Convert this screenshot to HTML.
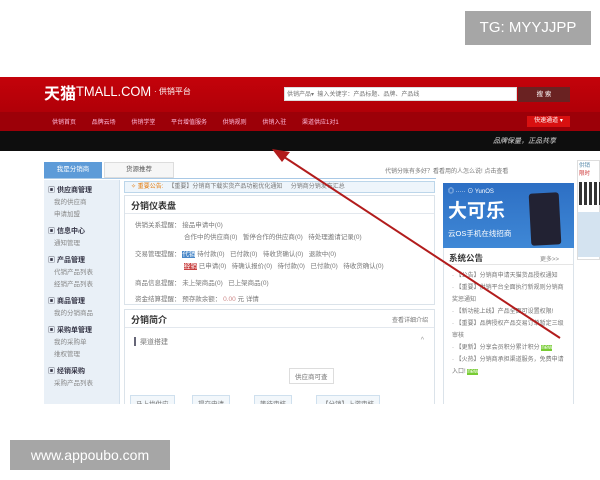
<!DOCTYPE html>
<html><head><meta charset="utf-8"><style>
*{margin:0;padding:0;box-sizing:border-box}
body{width:600px;height:480px;background:#fff;position:relative;overflow:hidden;font-family:"Liberation Sans","Noto Sans CJK SC",sans-serif;font-size:7px;color:#555}
.a{position:absolute}
.cn{font-family:"Liberation Sans","Noto Sans CJK SC",sans-serif}
.side div{padding-left:10px;line-height:12px;color:#888;font-size:6.5px}
.side .h{font-weight:bold;color:#334;padding-left:4px;margin-top:5px;font-size:7px}
.row{position:absolute;left:10px;font-size:6.5px;color:#777;white-space:nowrap}
.box{position:absolute;border:1px solid #cfe0ee;background:#f2f7fb;font-size:6.5px;color:#777;padding:2px 5px;white-space:nowrap}
</style></head><body>

<div class="a" style="left:0;top:77px;width:600px;height:54px;background:linear-gradient(#c4020a,#b00008 65%,#8e0007)"></div>
<div class="a" style="left:0;top:112px;width:600px;height:19px;background:#9c0008"></div>
<div class="a" style="left:0;top:131px;width:600px;height:20px;background:#0e0e0e"></div>
<div class="a cn" style="left:44px;top:80px;color:#fff;font-size:16px;font-weight:bold">天猫</div>
<div class="a" style="left:76px;top:83px;color:#fff;font-size:14px;transform:scaleX(0.92);transform-origin:left">TMALL.COM</div>
<div class="a cn" style="left:154px;top:86px;color:#fff;font-size:8px">· 供销平台</div>
<div class="a" style="left:284px;top:87px;width:233px;height:14px;background:#fff;border:1px solid #ddd"></div>
<div class="a cn" style="left:287px;top:89px;font-size:6px;color:#777">供销产品▾ &nbsp;输入关键字：产品标题、品牌、产品线</div>
<div class="a" style="left:518px;top:87px;width:52px;height:15px;background:#6a2222;color:#fff;font-size:6.5px;text-align:center;line-height:15px">搜 索</div>
<div class="a cn" style="left:52px;top:117px;color:#fbd;font-size:6px;word-spacing:14px;white-space:nowrap">供销首页 品牌云场 供销学堂 平台增值服务 供销规则 供销入驻 渠道供应1对1</div>
<div class="a" style="left:527px;top:116px;width:43px;height:11px;background:#d81010;color:#fff;font-size:6px;line-height:11px;text-align:center">快速通道 ▾</div>
<div class="a cn" style="left:493px;top:136px;color:#ddd;font-size:7px;font-style:italic">品牌保量，正品共享</div>

<div class="a" style="left:44px;top:162px;width:58px;height:16px;background:#5d9bd8;color:#fff;font-size:6.5px;text-align:center;line-height:16px">我是分销商</div>
<div class="a" style="left:104px;top:162px;width:70px;height:16px;background:#f6f6f6;border:1px solid #ddd;font-size:6.5px;text-align:center;line-height:14px">货源推荐</div>
<div class="a" style="left:44px;top:178px;width:392px;height:1px;background:#a9c9e6"></div>
<div class="a cn" style="left:385px;top:166px;font-size:6px;color:#777;white-space:nowrap">代销分账有多好？看看用的人怎么说! 点击查看</div>

<div class="a side" style="left:44px;top:180px;width:76px;height:224px;background:#e9f0f7;border-right:1px solid #d3e0ec">
<div class="h">▣ 供应商管理</div><div>我的供应商</div><div>申请加盟</div>
<div class="h">▣ 信息中心</div><div>通知管理</div>
<div class="h">▣ 产品管理</div><div>代销产品列表</div><div>经销产品列表</div>
<div class="h">▣ 商品管理</div><div>我的分销商品</div>
<div class="h">▣ 采购单管理</div><div>我的采购单</div><div>维权管理</div>
<div class="h">▣ 经销采购</div><div>采购产品列表</div>
</div>

<div class="a" style="left:124px;top:181px;width:311px;height:12px;background:#eef5fb;border:1px solid #bcd6ea;font-size:6px;color:#777;line-height:10px;padding-left:6px;white-space:nowrap"><span style="color:#e47a0a">✧ 重要公告:</span> &nbsp; 【重要】分销商下载实货产品功能优化通知 &nbsp; &nbsp; 分销商分销发布汇总</div>
<div class="a" style="left:124px;top:195px;width:311px;height:110px;border:1px solid #dbe3ea;background:#fff">
 <div style="height:18px;border-bottom:1px solid #e3e8ee;font-size:9px;font-weight:bold;color:#333;padding:3px 6px">分销仪表盘</div>
 <div class="row" style="top:23px">供销关系提醒： 接品申请中(0)</div>
 <div class="row" style="top:35px;left:59px">合作中的供应商(0) &nbsp; 暂停合作的供应商(0) &nbsp; 待处理邀请记录(0)</div>
 <div class="row" style="top:52px">交易管理提醒： <span style="background:#4a88c8;color:#fff">代销</span> 待付款(0) &nbsp; 已付款(0) &nbsp; 待收货确认(0) &nbsp; 退款中(0)</div>
 <div class="row" style="top:64px;left:59px"><span style="background:#c84040;color:#fff">经销</span> 已申请(0) &nbsp; 待确认报价(0) &nbsp; 待付款(0) &nbsp; 已付款(0) &nbsp; 待收货确认(0)</div>
 <div class="row" style="top:81px">商品信息提醒： 未上架商品(0) &nbsp; 已上架商品(0)</div>
 <div class="row" style="top:97px">资金结算提醒： 预存款余额： <span style="color:#c88">0.00</span> 元 详情</div>
</div>
<div class="a" style="left:124px;top:309px;width:311px;height:100px;border:1px solid #dbe3ea;background:#fff">
 <div style="height:18px;border-bottom:1px solid #e3e8ee;font-size:9px;font-weight:bold;color:#333;padding:3px 6px">分销简介<span style="float:right;font-size:6px;font-weight:normal;color:#777;margin-top:2px">查看详细介绍</span></div>
 <div class="a" style="left:9px;top:27px;width:2px;height:9px;background:#667"></div>
 <div class="a" style="left:15px;top:27px;font-size:7px;color:#777">渠道搭建</div>
 <div class="a" style="right:10px;top:27px;font-size:7px;color:#999">^</div>
 <div class="box" style="left:164px;top:58px;background:#fff;border-color:#ddd">供应商可查</div>
 <div class="box" style="left:5px;top:85px">马上找供应</div>
 <div class="box" style="left:67px;top:85px">提交申请</div>
 <div class="box" style="left:129px;top:85px">等待审核</div>
 <div class="box" style="left:191px;top:85px">【分销】上游审核</div>
</div>

<div class="a" style="left:443px;top:183px;width:131px;height:230px;border:1px solid #dbe3ea;background:#fff"></div>
<div class="a" style="left:443px;top:183px;width:131px;height:65px;background:linear-gradient(#2d6fc4,#3f88d6)"></div>
<div class="a" style="left:448px;top:186px;color:#fff;font-size:6px">◎ ····· ⊙ YunOS</div>
<div class="a cn" style="left:448px;top:196px;color:#fff;font-size:19px;font-weight:bold">大可乐</div>
<div class="a cn" style="left:448px;top:228px;color:#fff;font-size:7.5px">云OS手机在线招商</div>
<div class="a" style="left:530px;top:193px;width:30px;height:52px;background:#223;border-radius:3px;transform:rotate(-3deg)"></div>
<div class="a" style="left:449px;top:252px;font-size:8.5px;color:#333;font-weight:bold">系统公告</div>
<div class="a" style="left:540px;top:254px;font-size:6px;color:#888">更多>></div>
<div class="a" style="left:444px;top:264px;width:129px;height:1px;background:#e5e5e5"></div>
<div class="a" style="left:452px;top:270px;width:116px;font-size:6px;color:#777;line-height:12px">· 【公告】分销商申请天猫货品授权通知<br>· 【重要】供销平台全面执行新规则分销商奖惩通知<br>· 【新功能上线】产品全面可设置权限!<br>· 【重要】品牌授权产品交易订单暂定三级审核<br>· 【更新】分享会员积分累计积分 <span style="background:#7c3;color:#fff">new</span><br>· 【火热】分销商承担渠道服务，免费申请入口! <span style="background:#7c3;color:#fff">new</span></div>

<div class="a" style="left:577px;top:160px;width:23px;height:100px;border:1px solid #ddd;background:#fff"></div>
<div class="a" style="left:579px;top:161px;font-size:5.5px;color:#58a">供销<br><span style="color:#c33">限时</span></div>
<div class="a" style="left:579px;top:182px;width:21px;height:23px;background:repeating-linear-gradient(90deg,#111 0 3px,#fff 3px 5px),#111;opacity:.85"></div>
<div class="a" style="left:578px;top:212px;width:22px;height:45px;background:#d4e3f0"></div>

<svg class="a" style="left:0;top:0" width="600" height="480"><line x1="278" y1="153" x2="560" y2="338" stroke="#b21c1c" stroke-width="2"/><polygon points="272,149 290,152 282,162" fill="#b21c1c"/></svg>

<div class="a" style="left:0;top:404px;width:600px;height:76px;background:#fff"></div>
<div class="a" style="left:465px;top:11px;width:126px;height:34px;background:#a6a6a6;color:#fff;font-size:15px;line-height:34px;text-align:center">TG: MYYJJPP</div>
<div class="a" style="left:10px;top:440px;width:160px;height:30px;background:#a6a6a6;color:#fff;font-size:14px;line-height:30px;text-align:center">www.appoubo.com</div>
</body></html>
